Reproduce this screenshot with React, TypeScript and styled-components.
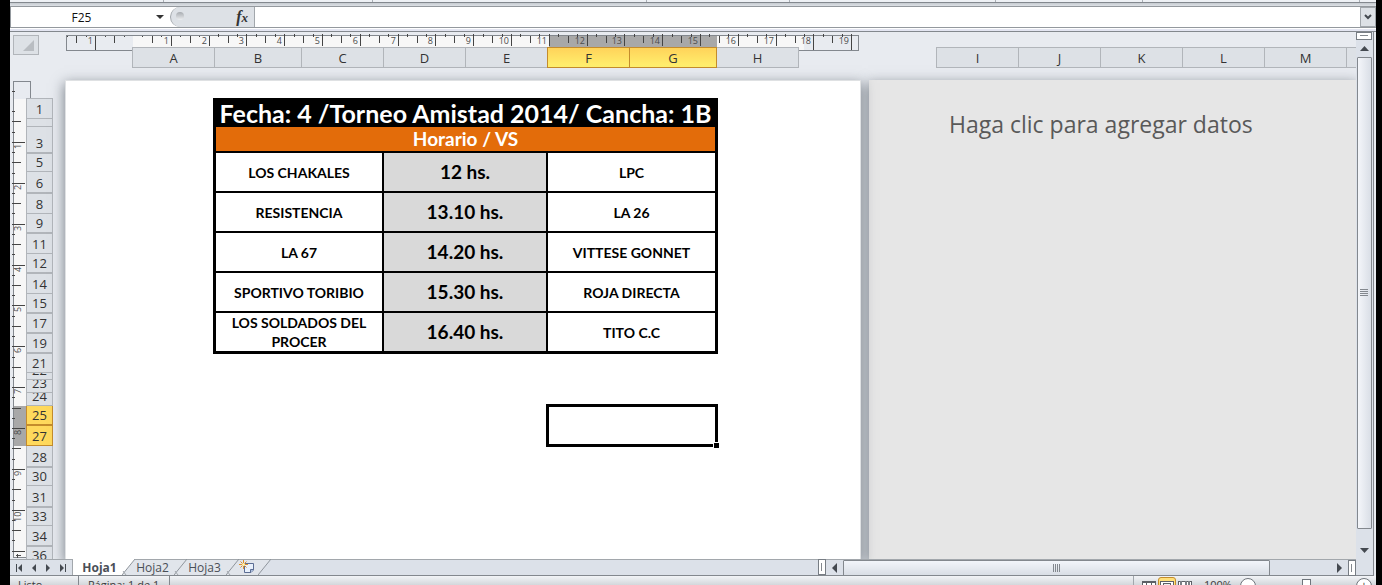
import React from "react";
import styled, { createGlobalStyle } from "styled-components";

const UI = `"Open Sans", "Noto Sans", sans-serif`;
const CELL = `Lato, "Open Sans", sans-serif`;

const GlobalStyle = createGlobalStyle`
  *, *::before, *::after { box-sizing: border-box; }
  body { margin: 0; background: #000; font-family: ${UI}; color: #3c3c3c; }
  button, input { font: inherit; color: inherit; margin: 0; padding: 0; border: 0; background: none; border-radius: 0; }
  svg { display: block; }
`;

const Frame = styled.div`
  display: flex;
  flex-direction: column;
  height: 100vh;
  margin: 0 6px 0 10px;
  overflow: hidden;
  background: #e8ebf0;
`;

/* ---------- ribbon edge and formula bar ---------- */

const RibbonEdge = styled.div`
  display: flex;
  flex: none;
  height: 7px;
  background: linear-gradient(#eef1f5 0 2px, #83888e 2px 3px, #c5cacf 3px, #dde1e6 6px, #94999e 6px 7px);
`;

const RibbonGroup = styled.div<{ $w: number }>`
  flex: none;
  width: ${(p) => p.$w}px;
  height: 2px;
  border-right: 1px solid #a9aeb5;
`;

const FormulaBar = styled.div`
  display: flex;
  flex: none;
  height: 21px;
  background: #fff;
  border-bottom: 1px solid #94999e;
`;

const BarGap = styled.div`
  flex: none;
  height: 4px;
  background: #e4e6f2;
  border-top: 1px solid #fff;
  border-bottom: 1px solid #83888e;
`;

const NameInput = styled.input`
  width: 142px;
  border-left: 1px solid #94999e;
  text-align: center;
  font-size: 12px;
  color: #111;
  outline: none;
`;

const NameToggle = styled.button`
  display: flex;
  align-items: center;
  justify-content: center;
  width: 16px;
`;

const FxGroup = styled.div`
  display: flex;
  align-items: center;
  justify-content: space-between;
  width: 85px;
  margin-left: 2px;
  padding: 0 6px 0 5px;
  border: 1px solid #a2a7ac;
  border-width: 0 1px;
  border-radius: 11px 0 0 11px;
  background: #dde1e6;
`;

const Knob = styled.span`
  width: 8px;
  height: 8px;
  margin-bottom: 2px;
  border-radius: 50%;
  background: linear-gradient(#a7abb0, #eceef0);
`;

const FxButton = styled.button`
  font: italic bold 16px/18px "Liberation Serif", serif;
  color: #333;
  small { font-size: 13px; }
`;

const FormulaInput = styled.input`
  flex: 1;
  min-width: 0;
  padding: 0 4px;
  font-size: 12px;
  outline: none;
`;

const ExpandButton = styled.button`
  display: flex;
  align-items: center;
  justify-content: center;
  width: 16px;
  border: 1px solid #a2a7ac;
  background: #dde1e6;
`;

/* ---------- sheet ---------- */

const Workspace = styled.div`
  display: flex;
  flex: 1;
  min-height: 0;
`;

const Sheet = styled.div`
  display: flex;
  flex: 1;
  flex-direction: column;
  min-width: 0;
  overflow: hidden;
  background: #e8ebf0;
`;

const HeaderZone = styled.div`
  display: flex;
  flex: none;
  height: 48px;
  padding: 3px 0 0 3px;
`;

const SelectAll = styled.button`
  display: flex;
  flex: none;
  align-items: flex-end;
  justify-content: flex-end;
  width: 26px;
  height: 20px;
  padding: 3px 4px;
  border: 1px solid #b1b5ba;
  background: #dde1e6;
`;

const HeaderStack = styled.div`
  flex: 1;
  min-width: 0;
  margin-left: 27px;
`;

const HeaderRow = styled.div`
  display: flex;
  gap: 137px;
  margin: -4px 0 0 66px;
  position: relative;
`;

const HeaderGroup = styled.div`
  display: flex;
  flex: none;
`;

const ColumnHeader = styled.button<{ $w: number; $on?: boolean; $edge?: "none" | "both" }>`
  width: ${(p) => p.$w}px;
  height: 21px;
  padding-top: 2px;
  font-size: 13px;
  line-height: 17px;
  color: #333;
  border: 1px solid ${(p) => (p.$on ? "#c48c2c" : "#b1b5ba")};
  border-right-width: ${(p) => (p.$edge ? 1 : 0)}px;
  border-left-width: ${(p) => (p.$edge === "none" ? 0 : 1)}px;
  background: ${(p) => (p.$on ? "linear-gradient(#ffd35a, #fff06e)" : "#dde1e6")};
`;

const SheetBody = styled.div`
  display: flex;
  flex: 1;
  min-height: 0;
  padding-left: 3px;
`;

const SideRuler = styled.div`
  flex: none;
  width: 13px;
  padding-top: 1px;
`;

const RowHeaders = styled.div`
  position: relative;
  flex: none;
  width: 27px;
  margin: 18px 12px 0 0;
  border: 1px solid #b1b5ba;
  border-bottom: 0;
  background: #dde1e6;
`;

const RowHeader = styled.button<{ $h: number; $thick?: boolean; $on?: boolean }>`
  display: flex;
  align-items: flex-end;
  justify-content: center;
  width: ${(p) => (p.$on ? 27 : 25)}px;
  height: ${(p) => p.$h}px;
  margin-left: ${(p) => (p.$on ? -1 : 0)}px;
  overflow: hidden;
  font-size: 13px;
  line-height: 17px;
  color: #333;
  border-bottom: ${(p) => (p.$thick ? 2 : 1)}px solid #b1b5ba;
  ${(p) => p.$on && "background: #ffd95c; border-color: #c48c2c; border-style: solid; border-left-width: 1px; border-right-width: 1px;"}
`;

const Page = styled.section`
  position: relative;
  z-index: 1;
  flex: none;
  width: 796px;
  padding: 17px 0 0 147px;
  background: #fff;
  border: 1px solid #dfe1e3;
  border-bottom: 0;
  box-shadow: 0 4px 12px 1px rgba(60, 70, 80, 0.6);
`;

const EmptyPage = styled.section`
  flex: 1;
  min-width: 0;
  margin-left: 8px;
  padding: 28px 0 0 80px;
  white-space: nowrap;
  font: 23px/32px ${UI};
  color: #595959;
  background: #e6e6e6;
  box-shadow: 0 4px 12px 1px rgba(60, 70, 80, 0.6);
`;

const Fixture = styled.table`
  table-layout: fixed;
  width: 505px;
  border: 1px solid #000;
  border-collapse: separate;
  border-spacing: 2px;
  background: #000;
  font-family: ${CELL};
  color: #000;
  td, th { padding: 0; text-align: center; vertical-align: middle; white-space: nowrap; }
`;

const TitleCell = styled.th`
  height: 24px;
  font-size: 25px;
  line-height: 24px;
  color: #fff;
`;

const SubtitleCell = styled.th`
  height: 24px;
  font-size: 19px;
  line-height: 24px;
  color: #fff;
  background: #e36c0a;
`;

const TeamCell = styled.td`
  && { white-space: normal; }
  height: 38px;
  font-size: 14px;
  font-weight: 700;
  line-height: 19px;
  background: #fff;
`;

const TimeCell = styled.td`
  height: 38px;
  font-size: 19px;
  font-weight: 700;
  line-height: 24px;
  background: #d9d9d9;
`;

const Selection = styled.div`
  position: relative;
  width: 172px;
  height: 43px;
  margin: 50px 0 0 333px;
  border: 3px solid #000;
  &::after {
    content: "";
    position: absolute;
    right: -4px;
    bottom: -4px;
    width: 6px;
    height: 6px;
    background: #000;
    border: 1px solid #fff;
    border-width: 1px 0 0 1px;
  }
`;

/* ---------- scroll bars ---------- */

const SideBar = styled.div`
  display: flex;
  flex: none;
  flex-direction: column;
  align-items: center;
  width: 18px;
  margin-right: 2px;
  padding-right: 1px;
  border-right: 1px solid #83888e;
  background: #dce1e9;
`;

const Splitter = styled.div<{ $side?: boolean }>`
  flex: none;
  width: ${(p) => (p.$side ? 8 : 16)}px;
  height: ${(p) => (p.$side ? 16 : 8)}px;
  padding: ${(p) => (p.$side ? "3px 2px" : "2px 3px")};
  border: 1px solid #777d84;
  background: #fff;
  &::before {
    content: "";
    display: block;
    width: ${(p) => (p.$side ? "1px" : "100%")};
    height: ${(p) => (p.$side ? "100%" : "1px")};
    background: #83888e;
  }
`;

const ScrollButton = styled.button`
  display: flex;
  flex: none;
  align-items: center;
  justify-content: center;
  width: 17px;
  height: 17px;
`;

const Thumb = styled.div<{ $side?: boolean }>`
  display: flex;
  align-items: center;
  justify-content: center;
  border: 1px solid #83888e;
  border-radius: 1px;
  ${(p) =>
    p.$side
      ? "flex: 1; width: 15px; background: linear-gradient(90deg, #f4f6fa, #d9dee6);"
      : "flex: 427; height: 16px; background: linear-gradient(#f2f5fa, #d9dee5);"}
`;

const VSpace = styled.div`
  flex: none;
  height: 13px;
`;

const HTrack = styled.div`
  flex: 61;
`;

const BottomBar = styled.div`
  display: flex;
  flex: none;
  height: 17px;
  margin-right: 2px;
  background: #dce1e9;
  border-bottom: 1px solid #83888e;
`;

const NavButtons = styled.div`
  display: flex;
  flex: none;
  align-items: center;
  justify-content: space-around;
  width: 63px;
  padding: 0 2px;
  border: 1px solid #a2a7ac;
  border-width: 1px 1px 0 0;
`;

const NavButton = styled.button`
  display: flex;
  align-items: center;
  justify-content: center;
  width: 14px;
`;

const Tab = styled.button<{ $active?: boolean }>`
  flex: none;
  width: ${(p) => (p.$active ? 49 : 39)}px;
  height: 16px;
  padding: ${(p) => (p.$active ? "0 0 0 4px" : "0 4px 0 0")};
  font-size: 12px;
  line-height: 15px;
  white-space: nowrap;
  color: #4a4f57;
  font-weight: ${(p) => (p.$active ? 700 : 400)};
  background: ${(p) => (p.$active ? "#fff" : "#e1e5eb")};
  border-top: 1px solid ${(p) => (p.$active ? "#fff" : "#a2a7ac")};
`;

const NewTab = styled.button`
  display: flex;
  justify-content: flex-start;
  flex: none;
  width: 19px;
  height: 16px;
  background: #e1e5eb;
  border-top: 1px solid #a2a7ac;
`;

const TabSpace = styled.div`
  flex: 0 1 547px;
  border-top: 1px solid #a2a7ac;
`;

const HScroll = styled.div`
  display: flex;
  flex: 1;
  align-items: center;
  min-width: 120px;
  border-top: 1px solid #a2a7ac;
`;

const Corner = styled.div`
  flex: none;
  width: 18px;
  border: 1px solid #83888e;
  border-width: 0 1px 0 0;
  background: #dce1e9;
`;

/* ---------- status bar ---------- */

const StatusClip = styled.div`
  flex: none;
  height: 9px;
  overflow: hidden;
  background: linear-gradient(#f2f4f7, #d3d7db);
`;

const StatusBar = styled.div`
  display: flex;
  align-items: flex-start;
  height: 22px;
  padding: 0 4px 0 8px;
  font-size: 11px;
  line-height: 18px;
  color: #3c3c3c;
`;

const StatusItem = styled.span<{ $w: number }>`
  width: ${(p) => p.$w}px;
  height: 22px;
  margin-right: 9px;
  border-right: 1px solid #83888e;
`;

const StatusFill = styled.span`
  flex: 1;
  height: 22px;
  margin-right: 6px;
  border-right: 1px solid #a2a7ac;
`;

const ViewButton = styled.button<{ $on?: boolean }>`
  display: flex;
  align-items: center;
  justify-content: center;
  width: 18px;
  height: 19px;
  margin-top: 1px;
  border-radius: 3px;
  border: 1px solid ${(p) => (p.$on ? "#c48c2c" : "transparent")};
  background: ${(p) => (p.$on ? "#ffe07a" : "transparent")};
`;

const ZoomValue = styled.span`
  width: 30px;
  margin: 0 6px 0 10px;
`;

const RoundButton = styled.button`
  flex: none;
  width: 16px;
  height: 16px;
  margin-top: 2px;
  border: 1px solid #6f757c;
  border-radius: 50%;
  background: #fff;
  font-size: 12px;
  line-height: 12px;
`;

const ZoomSlider = styled.input`
  width: 100px;
  height: 16px;
  margin-top: 2px;
  appearance: none;
  &::-webkit-slider-thumb {
    appearance: none;
    width: 9px;
    height: 14px;
    border: 1px solid #6f757c;
    background: #fff;
  }
`;

/* ---------- data ---------- */

type Column = { name: string; w: number; on?: boolean; edge?: "none" | "both" };

const mainColumns: Column[] = [
  { name: "A", w: 82 },
  { name: "B", w: 87 },
  { name: "C", w: 82 },
  { name: "D", w: 82 },
  { name: "E", w: 82 },
  { name: "F", w: 82, on: true },
  { name: "G", w: 88, on: true, edge: "both" },
  { name: "H", w: 82, edge: "none" },
];

const nextColumns: Column[] = ["I", "J", "K", "L", "M", ""].map((name) => ({ name, w: 82 }));

type Row = [label: string, height: number, thick?: boolean, on?: boolean];

const rows: Row[] = [
  ["1", 20], ["", 8], ["3", 27, true], ["5", 18], ["6", 22, true], ["8", 20], ["9", 20, true],
  ["11", 20], ["12", 20, true], ["14", 20], ["15", 20, true], ["17", 20, true], ["19", 20, true],
  ["21", 19], ["22", 7], ["23", 13], ["24", 13], ["25", 20, true, true], ["27", 20, false, true],
  ["28", 22, true], ["30", 18], ["31", 22, true], ["33", 18], ["34", 21, true], ["36", 18],
];

const matches = [
  ["LOS CHAKALES", "12 hs.", "LPC"],
  ["RESISTENCIA", "13.10 hs.", "LA 26"],
  ["LA 67", "14.20 hs.", "VITTESE GONNET"],
  ["SPORTIVO TORIBIO", "15.30 hs.", "ROJA DIRECTA"],
  ["LOS SOLDADOS DEL PROCER", "16.40 hs.", "TITO C.C"],
];

/* ---------- drawings ---------- */

const range = (from: number, to: number) => Array.from({ length: to - from + 1 }, (_, i) => from + i);

const RulerSvg = styled.svg`
  overflow: visible;
`;

function TopRuler() {
  const at = (quarter: number) => Math.round(67 + quarter * 9.45);
  return (
    <RulerSvg width="793" height="16" shapeRendering="crispEdges">
      <rect x="67" y="0" width="671" height="16" fill="#f7f7f7" />
      <rect x="483" y="0" width="168" height="16" fill="#a8a8a8" />
      <path d="M0.5 16V0.5H792.5V15.5H733M0.5 15.5H67" fill="none" stroke="#83888e" />
      {range(-7, 76).map((q) => {
        const x = at(q);
        if (q === 0) return null;
        const top = q > 8 ? -1 : 1;
        if (q % 4 === 0) return <rect key={q} x={x} y={top} width="1" height={q < 0 || q > 70 ? 15 - top : 11 - top} fill="#444" />;
        if (q % 2 === 0) return <rect key={q} x={x} y="1" width="1" height="7" fill="#444" />;
        return <rect key={q} x={x} y={top} width="1" height={q > 8 ? 3 : 1} fill="#444" />;
      })}
      {[-1, ...range(1, 19)].map((n) => (
        <text key={n} x={at(n * 4) - 2} y="9" textAnchor="end" fontSize="9" fill="#4c4c4c" fontFamily={UI}>
          {Math.abs(n)}
        </text>
      ))}
    </RulerSvg>
  );
}

function LeftRuler() {
  const at = (quarter: number) => Math.round(20 + quarter * 10.22);
  return (
    <RulerSvg width="18" height="477" shapeRendering="crispEdges">
      <rect x="0" y="18" width="13" height="459" fill="#f7f7f7" />
      <rect x="0" y="325" width="13" height="40" fill="#a8a8a8" />
      <path d="M0.5 477V0.5H17.5V18M0 476.5H13" fill="none" stroke="#83888e" />
      {range(-1, 46).map((q) => {
        if (q === 0) return null;
        const y = at(q);
        if (q % 4 === 0) return <rect key={q} x="-1" y={y} width="13" height="1" fill="#444" />;
        if (q % 2 === 0) return <rect key={q} x="-1" y={y} width="9" height="1" fill="#444" />;
        return <rect key={q} x="-1" y={y} width="3" height="1" fill="#444" />;
      })}
      {range(1, 10).map((n) => (
        <text key={n} transform={`translate(8 ${at(n * 4) + (n > 9 ? 12 : 7)}) rotate(-90)`} fontSize="9" fill="#4c4c4c" fontFamily={UI}>
          {n}
        </text>
      ))}
      <path d="M3 474.5H8M4 472.5V476.5" stroke="#4c4c4c" />
    </RulerSvg>
  );
}

const arrows = {
  up: "M0 5L4.5 0L9 5Z",
  down: "M0 0H9L4.5 5Z",
  left: "M5 0V10L0 5Z",
  right: "M0 0V10L5 5Z",
};

function Arrow({ dir }: { dir: keyof typeof arrows }) {
  const side = dir === "left" || dir === "right";
  return (
    <svg width={side ? 5 : 9} height={side ? 10 : 5}>
      <path d={arrows[dir]} fill="#444950" />
    </svg>
  );
}

const navBars = ["M1.5 1V9", "", "", "M7.5 1V9"];
const navTriangles = ["M7 1V9L3 5Z", "M7 1V9L3 5Z", "M2 1V9L6 5Z", "M2 1V9L6 5Z"];
const navNames = ["Primera hoja", "Hoja anterior", "Hoja siguiente", "Última hoja"];

function Grip({ side }: { side?: boolean }) {
  return (
    <svg width="8" height="8" shapeRendering="crispEdges">
      <path d={side ? "M0 .5H8M0 2.5H8M0 4.5H8M0 6.5H8" : "M.5 0V8M2.5 0V8M4.5 0V8M6.5 0V8"} stroke="#83888e" />
    </svg>
  );
}

const SlashSvg = styled.svg`
  flex: none;
`;

function Slash({ left, right }: { left: string; right: string }) {
  const lastOne = right === "#dce1e9";
  return (
    <SlashSvg width="13" height="16">
      <rect width="13" height="16" fill={right} />
      <path d="M0 0H13L0 16Z" fill={left} />
      {left !== "#fff" && <path d="M0 .5H13" stroke="#a2a7ac" />}
      <path d="M0 16L13 0" stroke="#8f959c" />
      {!lastOne && <path d="M1 12L4 16" stroke="#a2a7ac" />}
    </SlashSvg>
  );
}

function NewSheetIcon() {
  return (
    <svg width="16" height="14">
      <path d="M5.5 3.5H14.5V10L12 12.5H5.5Z" fill="#e8f0fb" stroke="#5b6d93" />
      <path d="M14.5 9.5H11.5V12.5" fill="#a9bde0" stroke="#5b6d93" />
      <path d="M4.5 0V9M0 4.5H9M1.5 1.5L7.5 7.5M7.5 1.5L1.5 7.5" stroke="#dd8f2c" />
      <circle cx="4.5" cy="4.5" r="1.5" fill="#fff3b0" />
    </svg>
  );
}

function ViewIcon({ kind }: { kind: "grid" | "page" | "break" }) {
  return (
    <svg width="14" height="12" shapeRendering="crispEdges">
      <rect x=".5" y=".5" width="13" height="11" fill="#fff" stroke="#5c6066" />
      {kind === "grid" && <path d="M0 1H14M0 4.5H14M0 8.5H14M4.5 0V12M9.5 0V12" stroke="#5c6066" />}
      {kind === "page" && <rect x="3.5" y="2.5" width="7" height="9" fill="#eee" stroke="#5c6066" />}
      {kind === "break" && <path d="M3 0V12M8 0V12M11 0V12" stroke="#7c8086" strokeWidth="2" />}
    </svg>
  );
}

/* ---------- page ---------- */

function Headers({ columns }: { columns: Column[] }) {
  return (
    <HeaderGroup>
      {columns.map((c, i) => (
        <ColumnHeader key={i} $w={c.w} $on={c.on} $edge={c.edge}>
          {c.name}
        </ColumnHeader>
      ))}
    </HeaderGroup>
  );
}

const white = "#fff";
const tabTone = "#e1e5eb";

export default function App() {
  return (
    <>
      <GlobalStyle />
      <Frame>
        <RibbonEdge>
          {[154, 209, 274, 143, 206, 147, 217].map((w, i) => (
            <RibbonGroup key={i} $w={w} />
          ))}
        </RibbonEdge>
        <FormulaBar>
          <NameInput aria-label="Cuadro de nombres" defaultValue="F25" />
          <NameToggle aria-label="Mostrar nombres">
            <svg width="8" height="4">
              <path d="M0 0H8L4 4Z" fill="#333" />
            </svg>
          </NameToggle>
          <FxGroup>
            <Knob />
            <FxButton aria-label="Insertar función">
              f<small>x</small>
            </FxButton>
          </FxGroup>
          <FormulaInput aria-label="Barra de fórmulas" />
          <ExpandButton aria-label="Expandir barra de fórmulas">
            <svg width="8" height="6">
              <path d="M1 1L4 4L7 1" fill="none" stroke="#444950" strokeWidth="2" />
            </svg>
          </ExpandButton>
        </FormulaBar>
        <BarGap />
        <Workspace>
          <Sheet>
            <HeaderZone>
              <SelectAll aria-label="Seleccionar todo">
                <svg width="11" height="11">
                  <path d="M11 0V11H0Z" fill="#b9bdc2" />
                </svg>
              </SelectAll>
              <HeaderStack>
                <TopRuler />
                <HeaderRow>
                  <Headers columns={mainColumns} />
                  <Headers columns={nextColumns} />
                </HeaderRow>
              </HeaderStack>
            </HeaderZone>
            <SheetBody>
              <SideRuler>
                <LeftRuler />
              </SideRuler>
              <RowHeaders>
                {rows.map(([label, h, thick, on], i) => (
                  <RowHeader key={i} $h={h} $thick={thick} $on={on}>
                    {label}
                  </RowHeader>
                ))}
              </RowHeaders>
              <Page>
                <Fixture>
                  <colgroup>
                    <col width="166" />
                    <col width="162" />
                    <col width="167" />
                  </colgroup>
                  <thead>
                    <tr>
                      <TitleCell colSpan={3}>Fecha: 4 /Torneo Amistad 2014/ Cancha: 1B</TitleCell>
                    </tr>
                    <tr>
                      <SubtitleCell colSpan={3}>Horario / VS</SubtitleCell>
                    </tr>
                  </thead>
                  <tbody>
                    {matches.map(([home, time, away]) => (
                      <tr key={time}>
                        <TeamCell>{home}</TeamCell>
                        <TimeCell>{time}</TimeCell>
                        <TeamCell>{away}</TeamCell>
                      </tr>
                    ))}
                  </tbody>
                </Fixture>
                <Selection />
              </Page>
              <EmptyPage>Haga clic para agregar datos</EmptyPage>
            </SheetBody>
          </Sheet>
          <SideBar>
            <Splitter />
            <ScrollButton aria-label="Desplazar arriba">
              <Arrow dir="up" />
            </ScrollButton>
            <Thumb $side>
              <Grip side />
            </Thumb>
            <VSpace />
            <ScrollButton aria-label="Desplazar abajo">
              <Arrow dir="down" />
            </ScrollButton>
          </SideBar>
        </Workspace>
        <BottomBar>
          <NavButtons>
            {navTriangles.map((d, i) => (
              <NavButton key={i} aria-label={navNames[i]}>
                <svg width="9" height="10">
                  <path d={d} fill="#444950" />
                  <path d={navBars[i]} stroke="#444950" />
                </svg>
              </NavButton>
            ))}
          </NavButtons>
          <Tab $active>Hoja1</Tab>
          <Slash left={white} right={tabTone} />
          <Tab>Hoja2</Tab>
          <Slash left={tabTone} right={tabTone} />
          <Tab>Hoja3</Tab>
          <Slash left={tabTone} right={tabTone} />
          <NewTab aria-label="Insertar hoja">
            <NewSheetIcon />
          </NewTab>
          <Slash left={tabTone} right="#dce1e9" />
          <TabSpace />
          <Splitter $side />
          <HScroll>
            <ScrollButton aria-label="Desplazar a la izquierda">
              <Arrow dir="left" />
            </ScrollButton>
            <Thumb>
              <Grip />
            </Thumb>
            <HTrack />
            <ScrollButton aria-label="Desplazar a la derecha">
              <Arrow dir="right" />
            </ScrollButton>
            <Splitter $side />
          </HScroll>
          <Corner />
        </BottomBar>
        <StatusClip>
          <StatusBar>
            <StatusItem $w={61}>Listo</StatusItem>
            <StatusItem $w={82}>Página: 1 de 1</StatusItem>
            <StatusFill />
            <ViewButton aria-label="Normal">
              <ViewIcon kind="grid" />
            </ViewButton>
            <ViewButton $on aria-label="Diseño de página">
              <ViewIcon kind="page" />
            </ViewButton>
            <ViewButton aria-label="Vista previa de salto de página">
              <ViewIcon kind="break" />
            </ViewButton>
            <ZoomValue>100%</ZoomValue>
            <RoundButton aria-label="Alejar">−</RoundButton>
            <ZoomSlider type="range" aria-label="Zoom" defaultValue={50} />
            <RoundButton aria-label="Acercar">+</RoundButton>
          </StatusBar>
        </StatusClip>
      </Frame>
    </>
  );
}
